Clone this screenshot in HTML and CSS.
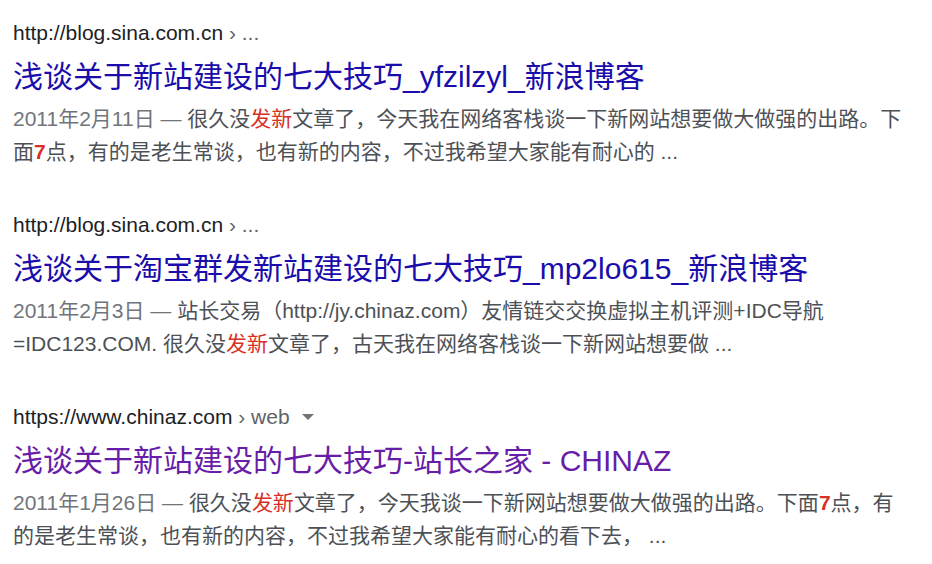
FILE: index.html
```html
<!DOCTYPE html>
<html lang="zh-CN">
<head>
	<meta charset="UTF-8">
	<title>浅谈关于新站建设的七大技巧</title>
	<link rel="stylesheet" href="styles.css">
</head>
<body>
	<div class="results">
		<div class="result">
			<div class="cite">http://blog.sina.com.cn<span class="crumb"> › ...</span></div>
			<a class="title" href="javascript:;">浅谈关于新站建设的七大技巧_yfzilzyl_新浪博客</a>
			<div class="snippet"><span class="date">2011年2月11日 — </span>很久没<em>发新</em>文章了，今天我在网络客栈谈一下新网站想要做大做强的出路。下面<em class="num">7</em>点，有的是老生常谈，也有新的内容，不过我希望大家能有耐心的 ...</div>
		</div>
		<div class="result">
			<div class="cite">http://blog.sina.com.cn<span class="crumb"> › ...</span></div>
			<a class="title" href="javascript:;">浅谈关于淘宝群发新站建设的七大技巧_mp2lo615_新浪博客</a>
			<div class="snippet"><span class="date">2011年2月3日 — </span>站长交易（http://jy.chinaz.com）友情链交交换虚拟主机评测+IDC导航 =IDC123.COM. 很久没<em>发新</em>文章了，古天我在网络客栈谈一下新网站想要做 ...</div>
		</div>
		<div class="result">
			<div class="cite">https://www.chinaz.com<span class="crumb"> › web</span><span class="arrow"></span></div>
			<a class="title visited" href="javascript:;">浅谈关于新站建设的七大技巧-站长之家 - CHINAZ</a>
			<div class="snippet"><span class="date">2011年1月26日 — </span>很久没<em>发新</em>文章了，今天我谈一下新网站想要做大做强的出路。下面<em class="num">7</em>点，有的是老生常谈，也有新的内容，不过我希望大家能有耐心的看下去，&nbsp;...</div>
		</div>
	</div>
</body>
</html>
```

FILE: styles.css
```css
body{
	margin: 0;
	background: #fff;
	font-family: "Liberation Sans", "Noto Sans CJK SC", sans-serif;
}

.results{
	width: 896px;
	padding: 19px 0 0 13px;
}

.result{
	margin-bottom: 43px;
}

.result:last-child{
	margin-bottom: 0;
}

.cite{
	font-size: 21px;
	line-height: 28px;
	color: #202124;
	display: flex;
	align-items: center;
}

.crumb{
	color: #5f6368;
	white-space: pre;
}

.arrow{
	width: 0;
	height: 0;
	margin-left: 12px;
	border-left: 6px solid transparent;
	border-right: 6px solid transparent;
	border-top: 6px solid #70757a;
}

.title{
	display: block;
	margin-top: 10px;
	font-size: 30px;
	line-height: 40px;
	color: #1a0dab;
	text-decoration: none;
}

.title.visited{
	color: #681da8;
}

.snippet{
	margin-top: 5px;
	font-size: 21px;
	line-height: 33px;
	color: #4d5156;
}

.date{
	color: #70757a;
}

.snippet em{
	font-style: normal;
	color: #d93025;
}

.snippet em.num{
	font-weight: bold;
}
```
